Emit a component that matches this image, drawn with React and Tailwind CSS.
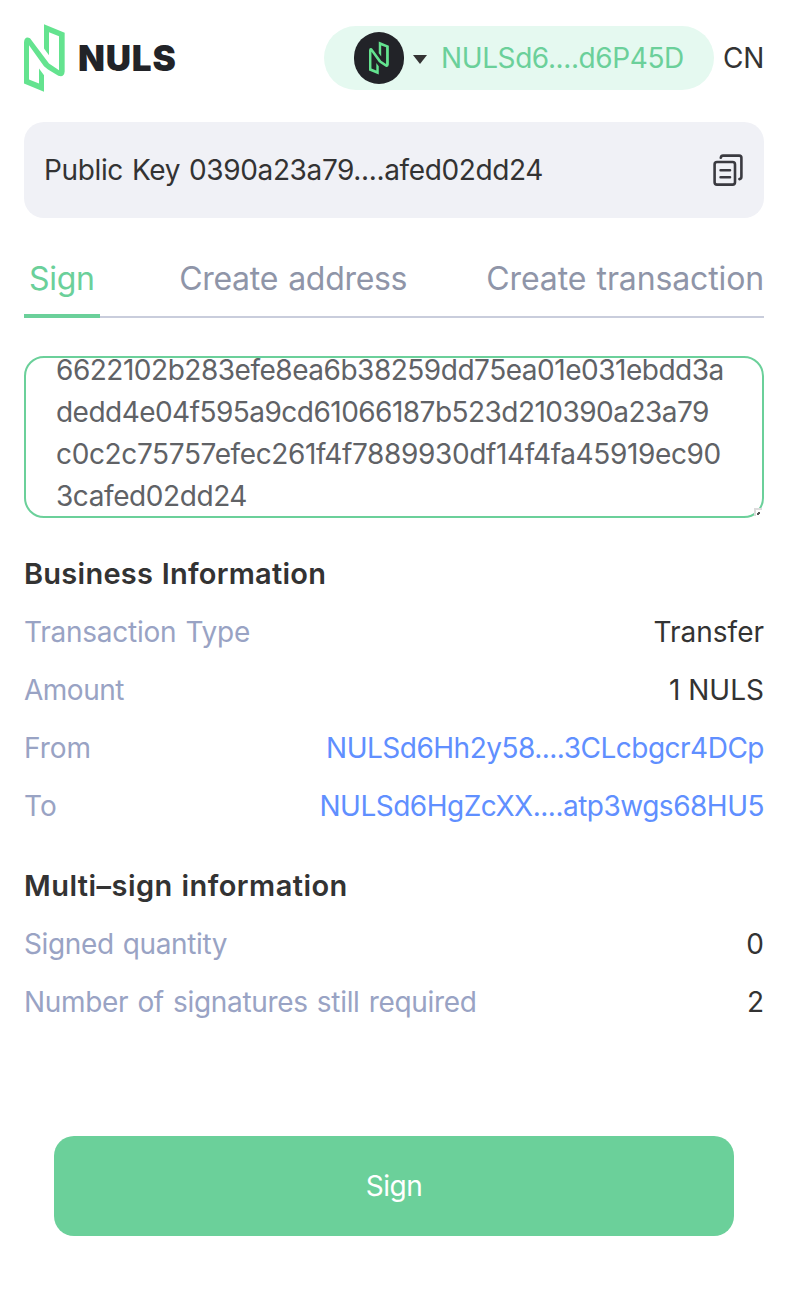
import React from "react";

function NulsMark({ className, fill }) {
  return (
    <svg viewBox="12 12 123 203" className={className} fill={fill} aria-hidden="true">
      <path d="M72 12L134 38V154Q132 173 115 167L84 148L72 138L27 75V178L57 190V145L72 165V215L12 190V66Q14 47 30 54L87 130L117 150V48L87 36V105L72 85Z" />
    </svg>
  );
}

function CopyIcon() {
  return (
    <svg viewBox="0 0 32 34" className="h-[34px] w-8" fill="none" stroke="#3a3a40" strokeWidth="2.6" strokeLinecap="round" strokeLinejoin="round" aria-hidden="true">
      <rect x="2.6" y="9" width="20.4" height="22.6" rx="2.4" />
      <path d="M8.6 17.3h9.4M8.6 24.2h9.4M8.8 4.8C9 3.2 9.8 2.6 11 2.6h16.2q2.2 0 2.2 2.2v19q0 2-2 2.3" />
    </svg>
  );
}

function Row({ label, labelClass, children, valueClass }) {
  return (
    <div className="flex h-[58px] items-center justify-between">
      <span className={`text-[#99a3c4] ${labelClass || ""}`}>{label}</span>
      <span className={valueClass}>{children}</span>
    </div>
  );
}

export default function App() {
  return (
    <main className="h-[1306px] w-[792px] overflow-hidden bg-white pr-7 pl-6 font-['Inter',sans-serif] text-[28px] leading-[42px] whitespace-nowrap text-[#333]">
      <header className="flex h-[122px] items-start pt-[26px]">
        <div className="-mt-[2px] flex">
          <NulsMark className="h-[68px] w-[41px]" fill="#64e38f" />
          <span className="ml-[13px] pt-[13px] text-[35px] font-black tracking-[0.8px] text-[#222328]">NULS</span>
        </div>
        <div className="ml-auto flex h-16 w-[390px] items-center rounded-full bg-[#e5f9f0] pl-[30px]">
          <span className="flex h-[52px] w-[50px] items-center justify-center rounded-full bg-[#222328]">
            <NulsMark className="h-[34px] w-5" fill="#64e38f" />
          </span>
          <svg viewBox="0 0 14 9" className="mt-[3px] ml-[9px] h-[9px] w-[14px]" fill="#333"><path d="M0 0h14L7 9z" /></svg>
          <span className="ml-[14px] tracking-[-0.4px] text-[#6bd09a]">NULSd6....d6P45D</span>
        </div>
        <span className="w-[50px] pt-[11px] text-right tracking-[-0.3px]">CN</span>
      </header>
      <section className="flex h-24 items-center justify-between rounded-[20px] bg-[#f0f1f6] px-5">
        <span className="tracking-[-0.37px] [word-spacing:1.5px]">Public Key 0390a23a79....afed02dd24</span>
        <CopyIcon />
      </section>
      <nav className="mt-[22px] flex h-[78px] justify-between border-b-2 border-[#c9cddc] text-[32px] text-[#8f95a8]">
        <span className="h-[78px] w-[76px] border-b-4 border-[#6bd09a] pt-[18px] pl-[5px] tracking-[-0.3px] text-[#6bd09a]">Sign</span>
        <span className="pt-[18px] tracking-[-0.3px] [word-spacing:1.5px]">Create address</span>
        <span className="pt-[18px] tracking-[-0.13px] [word-spacing:1.5px]">Create transaction</span>
      </nav>
      <section className="relative mt-[38px] h-[162px] rounded-[20px] border-2 border-[#6bd09a] pl-[30px] text-[#606266]">
        <div className="h-[33px] leading-[24px] tracking-[-0.48px]">6622102b283efe8ea6b38259dd75ea01e031ebdd3a</div>
        <div className="tracking-[-0.53px]">dedd4e04f595a9cd61066187b523d210390a23a79</div>
        <div className="tracking-[-0.37px]">c0c2c75757efec261f4f7889930df14f4fa45919ec90</div>
        <div className="h-10 tracking-[-0.42px]">3cafed02dd24</div>
        <svg viewBox="0 0 8 8" className="absolute right-0 bottom-0 size-2" aria-hidden="true">
          <path d="M0 0h8v2l-6 6H0z" fill="#dcdcdc" />
          <path d="M2 2h6v6H2z" fill="#fff" />
          <path d="M4 4h2v2H5v1H3V5h1z" fill="#555" />
        </svg>
      </section>
      <h2 className="mt-[35px] text-[29px] font-semibold tracking-[0.25px] [word-spacing:1px]">Business Information</h2>
      <div className="mt-[8px]">
        <Row label="Transaction Type" labelClass="tracking-[-0.25px] [word-spacing:1.5px]">Transfer</Row>
        <Row label="Amount" labelClass="tracking-[-0.5px]">1 NULS</Row>
        <Row label="From" valueClass="text-[#608fff] tracking-[-0.5px]">NULSd6Hh2y58....3CLcbgcr4DCp</Row>
        <Row label="To" valueClass="text-[#608fff] tracking-[-0.5px]">NULSd6HgZcXX....atp3wgs68HU5</Row>
      </div>
      <h2 className="mt-[30px] text-[29px] font-semibold tracking-[0.45px] [word-spacing:1px]">Multi–sign information</h2>
      <div className="mt-[8px]">
        <Row label="Signed quantity" labelClass="tracking-[-0.37px] [word-spacing:1.5px]">0</Row>
        <Row label="Number of signatures still required" labelClass="tracking-[-0.31px] [word-spacing:1.5px]">2</Row>
      </div>
      <button className="mx-[30px] mt-[105px] h-[100px] w-[680px] rounded-[20px] bg-[#6bd09a] tracking-[-0.5px] text-white">Sign</button>
    </main>
  );
}
